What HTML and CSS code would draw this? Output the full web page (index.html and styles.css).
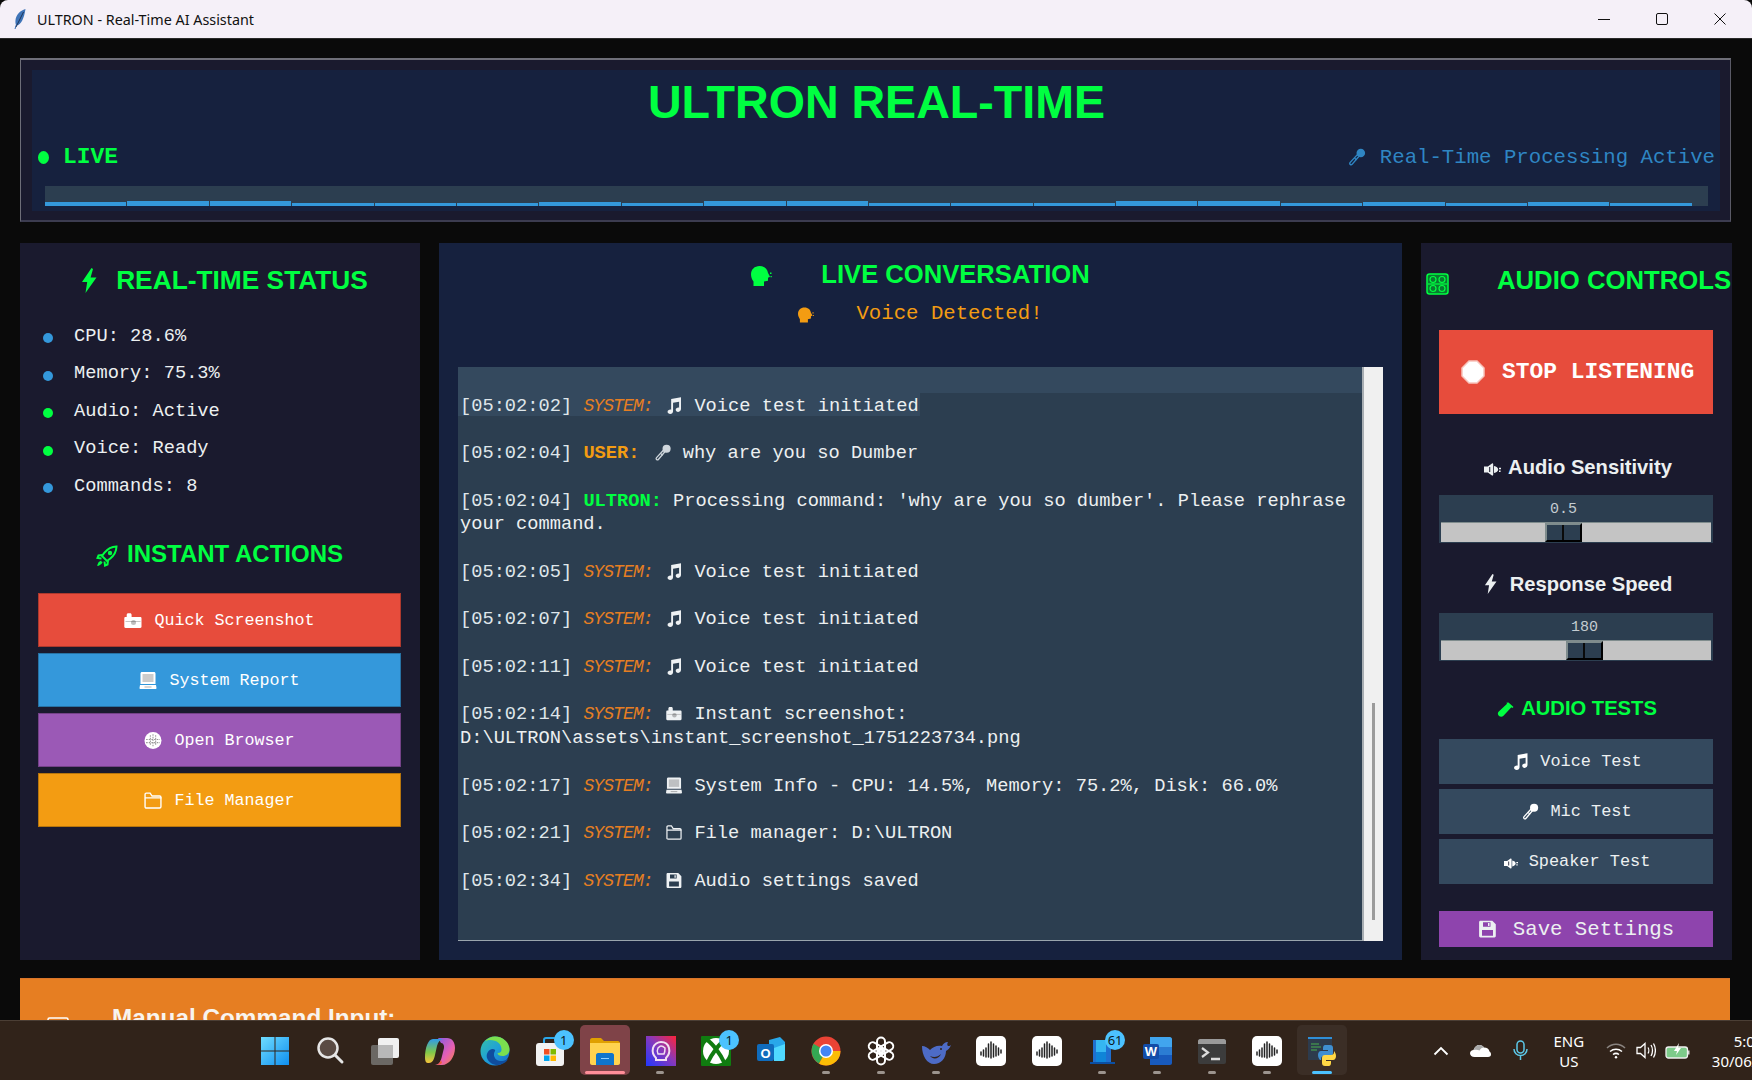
FILE: index.html
```html
<!DOCTYPE html>
<html lang="en">
<head>
<meta charset="utf-8">
<title>ULTRON - Real-Time AI Assistant</title>
<link rel="stylesheet" href="styles.css">
</head>
<body>
<svg class="defs" aria-hidden="true">
  <defs>
    <symbol id="i-bolt" viewBox="0 0 16 25"><path fill="currentColor" d="M10.500 0 1 14h5.200L4.500 25 15.500 9.500H9.600L12 1z"/></symbol>
    <symbol id="i-music" viewBox="0 0 16 18"><path fill="currentColor" d="M5 2.200 15.400.2v12.600c0 1.700-1.300 3-3 3-1.500 0-2.600-.9-2.600-2.200 0-1.400 1.300-2.400 2.900-2.400.3 0 .5 0 .7.1V5L7 6.100v9c0 1.700-1.300 2.900-3 2.900-1.600 0-2.800-.9-2.800-2.300 0-1.400 1.400-2.400 3-2.400.3 0 .6 0 .8.1z"/></symbol>
    <symbol id="i-mic" viewBox="0 0 18 18"><g fill="none" stroke="currentColor"><path stroke-width="1.400" d="M9.400 6.600 2.200 14.400c-.7.9-.6 1.700.2 2.200.7.4 1.300.2 1.900-.5l6.700-7.900z"/><path stroke-width="1.200" d="M6.500 10l2 2"/></g><circle cx="12.800" cy="5" r="4.300" fill="currentColor"/></symbol>
    <symbol id="i-cam" viewBox="0 0 18 16"><path fill="currentColor" d="M1.500 4.500h1.200V2.500C2.700 1.400 3.400.8 4.300.8h1.800c.9 0 1.500.6 1.500 1.700v2h8.700c.7 0 1.200.5 1.200 1.200v8.600c0 .7-.5 1.200-1.200 1.200H1.500c-.7 0-1.200-.5-1.200-1.200V5.700c0-.7.5-1.200 1.200-1.200z"/><path fill="#000" opacity=".22" d="M1.500 8.500h15v1h-15z"/><circle cx="9.500" cy="10" r="2.500" fill="#000" opacity=".25"/></symbol>
    <symbol id="i-monitor" viewBox="0 0 17 17"><path fill="currentColor" d="M2.500 0h12C15.400 0 16 .6 16 1.500V12H1V1.500C1 .6 1.600 0 2.500 0zM.5 13h16l.5 3c0 .6-.4 1-1 1H1c-.6 0-1-.4-1-1z"/><path fill="#000" opacity=".2" d="M3 2h11v8H3z"/><path fill="#000" opacity=".3" d="M5 14.500h7v1H5z"/></symbol>
    <symbol id="i-folder" viewBox="0 0 17 16"><path fill="none" stroke="currentColor" stroke-width="1.300" d="M1 14V2.300C1 1.600 1.500 1 2.200 1h3.600l1.800 2.800h7.200c.7 0 1.200.5 1.200 1.200v9c0 .6-.5 1.100-1.200 1.100H2.200C1.500 15.100 1 14.600 1 14zM1 5.500h15.800"/></symbol>
    <symbol id="i-save" viewBox="0 0 18 18"><path fill="currentColor" fill-rule="evenodd" d="M2 .7h11.800l3.500 3.500V16c0 .8-.6 1.400-1.300 1.400H2c-.8 0-1.400-.6-1.400-1.400V2.100C.6 1.300 1.200.7 2 .7zM4.500 2.300v4.500h7.500V2.300zM3.500 10v5.800h11V10z"/><path fill="currentColor" d="M9.500 3h1.500v3H9.500z"/></symbol>
    <symbol id="i-globe" viewBox="0 0 16 16"><circle cx="8" cy="8" r="8" fill="currentColor"/><path fill="none" stroke="#000" stroke-opacity=".4" stroke-width="1" stroke-dasharray="1.500 1" d="M1.500 7h13M1.500 10h13M5.500 3v10M8 2v12M10.500 3v10"/></symbol>
    <symbol id="i-rocket" viewBox="0 0 22 22"><g fill="none" stroke="currentColor" stroke-width="2"><path d="M20.500 1.500c-5 .2-9 2.400-12 6.200L6 11l5 5 3.300-2.500c3.800-3 6-7 6.200-12z"/><path d="M6.500 10 2.500 10.500 1.500 13l4 .5M12 15.500l-.5 4-2.500 1-.5-4M5.500 16.500c-1.500.5-2.700 1.700-3 3.200 1.500-.3 2.700-1.500 3.200-3"/></g><circle cx="14" cy="8" r="2.200" fill="currentColor"/></symbol>
    <symbol id="i-speech" viewBox="0 0 21 20"><path fill="currentColor" d="M8.500 0C13.500 0 16.500 3 17 7l2 3.700-2 1v3l-4 .8V20H2.500v-4.500C1 13.500 0 11 0 8.500 0 3.500 3.500 0 8.500 0z"/><path fill="currentColor" d="M19 6.500h1.500v1.400H19zM19.500 10h1.300v1.300h-1.300z"/></symbol>
    <symbol id="i-speaker" viewBox="0 0 17 13"><path fill="currentColor" d="M0 3.500h3.800L8 .5c.6-.4 1.200 0 1.200.7v10.600c0 .7-.6 1.100-1.200.7L3.800 9.500H0z"/><path fill="#1a1a2e" opacity=".8" d="M5 4h1.300v5H5z"/><path fill="currentColor" d="M10 3c2.600.4 4 1.800 4.200 3.500-.2 1.700-1.600 3.100-4.200 3.500zM15 4.800h2v1.400h-2zM15 7.500h1.600v1.400H15z"/></symbol>
    <symbol id="i-stop" viewBox="0 0 24 24"><path fill="#fff" stroke="#f8c4bc" stroke-width="1.500" d="M8 1h8l7 7v8l-7 7H8l-7-7V8z"/></symbol>
    <symbol id="i-knobs" viewBox="0 0 23 22"><rect x="1" y="1" width="21" height="20" rx="2.500" fill="#0a7a30" stroke="currentColor" stroke-width="1.500"/><g fill="none" stroke="currentColor" stroke-width="1.200"><circle cx="7" cy="6.500" r="3"/><circle cx="16" cy="6.500" r="3"/><circle cx="7" cy="15.500" r="3"/><circle cx="16" cy="15.500" r="3"/></g><path stroke="currentColor" stroke-width="1.200" d="M2 11h19"/></symbol>
    <symbol id="i-tube" viewBox="0 0 17 16"><path fill="currentColor" d="M11.500.5 16.500 5l-1.200 1.100-.9-.8-7.900 8.400c-1.300 1.400-3 1.500-4.500.3-1.500-1.300-1.500-3-.2-4.400l8.300-7.900-.8-.9z"/></symbol>
    <symbol id="aiwave" viewBox="0 0 30 30"><rect width="30" height="30" rx="5" fill="#fff"/><path fill="none" stroke="#222" stroke-width="1.500" stroke-linecap="round" d="M5 16v3M7.500 14v6M10 12v9M12.500 8v13M15 6v16M17.500 8v13M20 10v10M22.500 12v7M25 14v3"/></symbol>
  </defs>
</svg>

<div class="window">
  <div class="titlebar">
    <svg class="feather" viewBox="0 0 12 20"><path fill="#3f74b8" d="M11.500 0C6 1.500 2 6 1.500 11c-.2 2 0 3.500.4 4.500L.5 20h1l1.300-3.500C7 15.500 10 10 11.500 0z"/><path stroke="#15233f" stroke-width=".8" fill="none" d="M9.500 3 2 18"/></svg>
    <span class="title-text">ULTRON - Real-Time AI Assistant</span>
    <div class="winctl">
      <span class="winbtn"><svg width="12" height="12" viewBox="0 0 12 12"><path stroke="#111" d="M0 6.500h12"/></svg></span>
      <span class="winbtn"><svg width="12" height="12" viewBox="0 0 12 12"><rect x=".5" y=".5" width="11" height="11" rx="1.500" fill="none" stroke="#111"/></svg></span>
      <span class="winbtn"><svg width="12" height="12" viewBox="0 0 12 12"><path stroke="#111" d="m.5.5 11 11M11.500.5l-11 11"/></svg></span>
    </div>
  </div>

  <main class="content">
    <header class="hero">
      <div class="hero-inner">
        <h1 class="hero-title">ULTRON REAL-TIME</h1>
        <div class="hero-row">
          <span class="live"><span class="live-dot"></span>LIVE</span>
          <span class="proc"><svg class="ico-proc"><use href="#i-mic"/></svg>Real-Time Processing Active</span>
        </div>
        <div class="meter">
          <i style="height:4px"></i><i style="height:5px"></i><i style="height:5px"></i><i style="height:3px"></i><i style="height:3px"></i><i style="height:3px"></i><i style="height:4px"></i><i style="height:3px"></i><i style="height:5px"></i><i style="height:5px"></i><i style="height:3px"></i><i style="height:3px"></i><i style="height:3px"></i><i style="height:5px"></i><i style="height:5px"></i><i style="height:3px"></i><i style="height:4px"></i><i style="height:3px"></i><i style="height:4px"></i><i style="height:3px"></i>
        </div>
      </div>
    </header>

    <div class="columns">
      <aside class="panel panel-left">
        <h2 class="head head-status"><svg class="ico-bolt"><use href="#i-bolt"/></svg>REAL-TIME STATUS</h2>
        <ul class="status">
          <li><span class="dot dot-blue"></span>CPU: 28.6%</li>
          <li><span class="dot dot-blue"></span>Memory: 75.3%</li>
          <li><span class="dot dot-green"></span>Audio: Active</li>
          <li><span class="dot dot-green"></span>Voice: Ready</li>
          <li><span class="dot dot-blue"></span>Commands: 8</li>
        </ul>
        <h2 class="head head-actions"><svg class="ico-rocket"><use href="#i-rocket"/></svg>INSTANT ACTIONS</h2>
        <div class="actions">
          <button class="act act-red"><svg class="ico-act"><use href="#i-cam"/></svg>Quick Screenshot</button>
          <button class="act act-blue"><svg class="ico-act"><use href="#i-monitor"/></svg>System Report</button>
          <button class="act act-purple"><svg class="ico-act"><use href="#i-globe"/></svg>Open Browser</button>
          <button class="act act-orange"><svg class="ico-act"><use href="#i-folder"/></svg>File Manager</button>
        </div>
      </aside>

      <section class="panel panel-mid">
        <h2 class="head head-conv"><svg class="ico-speech"><use href="#i-speech"/></svg>LIVE CONVERSATION</h2>
        <div class="detected"><svg class="ico-speech-sm"><use href="#i-speech"/></svg>Voice Detected!</div>
        <div class="chat">
          <div class="log">
            <div class="sel-blank"></div>
            <p class="line line-sel"><span class="ts">[05:02:02]</span> <em class="sys">SYSTEM:</em> <svg class="ico-chat"><use href="#i-music"/></svg>Voice test initiated</p>
            <p class="line"><span class="ts">[05:02:04]</span> <b class="usr">USER:</b> <svg class="ico-chat ico-mic"><use href="#i-mic"/></svg>why are you so Dumber</p>
            <p class="line"><span class="ts">[05:02:04]</span> <b class="ult">ULTRON:</b> Processing command: 'why are you so dumber'. Please rephrase your command.</p>
            <p class="line"><span class="ts">[05:02:05]</span> <em class="sys">SYSTEM:</em> <svg class="ico-chat"><use href="#i-music"/></svg>Voice test initiated</p>
            <p class="line"><span class="ts">[05:02:07]</span> <em class="sys">SYSTEM:</em> <svg class="ico-chat"><use href="#i-music"/></svg>Voice test initiated</p>
            <p class="line"><span class="ts">[05:02:11]</span> <em class="sys">SYSTEM:</em> <svg class="ico-chat"><use href="#i-music"/></svg>Voice test initiated</p>
            <p class="line"><span class="ts">[05:02:14]</span> <em class="sys">SYSTEM:</em> <svg class="ico-chat"><use href="#i-cam"/></svg>Instant screenshot: D:\ULTRON\assets\instant_screenshot_1751223734.png</p>
            <p class="line"><span class="ts">[05:02:17]</span> <em class="sys">SYSTEM:</em> <svg class="ico-chat"><use href="#i-monitor"/></svg>System Info - CPU: 14.5%, Memory: 75.2%, Disk: 66.0%</p>
            <p class="line"><span class="ts">[05:02:21]</span> <em class="sys">SYSTEM:</em> <svg class="ico-chat"><use href="#i-folder"/></svg>File manager: D:\ULTRON</p>
            <p class="line"><span class="ts">[05:02:34]</span> <em class="sys">SYSTEM:</em> <svg class="ico-chat"><use href="#i-save"/></svg>Audio settings saved</p>
          </div>
          <div class="scrollbar"><span class="thumb"></span></div>
        </div>
      </section>

      <aside class="panel panel-right">
        <h2 class="head head-audio"><svg class="ico-knobs"><use href="#i-knobs"/></svg>AUDIO CONTROLS</h2>
        <button class="stop"><svg class="ico-stop"><use href="#i-stop"/></svg>STOP LISTENING</button>
        <h3 class="label label-a"><svg class="ico-spk"><use href="#i-speaker"/></svg>Audio Sensitivity</h3>
        <div class="slider">
          <div class="val" style="margin-left:104px">0.5</div>
          <div class="trough"><span class="knob" style="margin-left:104px"></span></div>
        </div>
        <h3 class="label label-b"><svg class="ico-bolt-sm"><use href="#i-bolt"/></svg>Response Speed</h3>
        <div class="slider">
          <div class="val" style="margin-left:125px">180</div>
          <div class="trough"><span class="knob" style="margin-left:125px"></span></div>
        </div>
        <h2 class="head head-tests"><svg class="ico-tube"><use href="#i-tube"/></svg>AUDIO TESTS</h2>
        <div class="tests">
          <button class="test"><svg class="ico-test"><use href="#i-music"/></svg>Voice Test</button>
          <button class="test"><svg class="ico-test"><use href="#i-mic"/></svg>Mic Test</button>
          <button class="test"><svg class="ico-test ico-test-spk"><use href="#i-speaker"/></svg>Speaker Test</button>
        </div>
        <button class="save"><svg class="ico-save"><use href="#i-save"/></svg>Save Settings</button>
      </aside>
    </div>

    <section class="manual">
      <svg class="ico-kbd" viewBox="0 0 22 14"><rect x="1" y="1" width="20" height="12" rx="1.500" fill="none" stroke="#fff" stroke-width="1.500"/></svg>
      <span>Manual Command Input:</span>
    </section>
  </main>
</div>

<footer class="taskbar">
  <div class="tb-apps">
    <span class="tb"><svg viewBox="0 0 30 30"><defs><linearGradient id="gw" x1="0" y1="0" x2="1" y2="1"><stop offset="0" stop-color="#6fdcff"/><stop offset="1" stop-color="#0f8ff0"/></linearGradient></defs><path fill="url(#gw)" d="M1 1h13.500v13.500H1zM15.500 1H29v13.500H15.500zM1 15.500h13.500V29H1zM15.500 15.500H29V29H15.500z"/></svg></span>
    <span class="tb"><svg viewBox="0 0 30 30"><circle cx="13" cy="12" r="9.500" fill="#5a4b44" stroke="#e6e6e6" stroke-width="2.500"/><path stroke="#e6e6e6" stroke-width="3" stroke-linecap="round" d="m20 19 7 7"/></svg></span>
    <span class="tb"><svg viewBox="0 0 30 30"><rect x="1" y="9" width="22" height="20" rx="2" fill="#6b6864"/><rect x="8" y="2" width="21" height="20" rx="2" fill="#f0f0f0"/><rect x="8" y="9" width="15" height="13" fill="#b8b8b8"/></svg></span>
    <span class="tb"><svg viewBox="0 0 30 30"><defs><linearGradient id="gc1" x1="0" y1="0" x2="0" y2="1"><stop offset="0" stop-color="#2f9ae8"/><stop offset=".55" stop-color="#7ec84a"/><stop offset="1" stop-color="#f5c33b"/></linearGradient><linearGradient id="gc2" x1="0" y1="0" x2="1" y2="1"><stop offset="0" stop-color="#7b5ce8"/><stop offset=".6" stop-color="#e65fb4"/><stop offset="1" stop-color="#f58a3c"/></linearGradient></defs><path fill="url(#gc2)" d="M13 2h9c5 0 8 4 8 10 0 9-6 17-13 17h-7c4 0 6-4 7-9l2-8c.5-3-1-5-3-5z"/><path fill="url(#gc1)" d="M8 3h10c-3 .5-5 3-6 7l-2 9c-1 5-3 8-6 8H3c-2 0-3-2-3-5C0 12 3 3 8 3z"/><path fill="#f0603c" d="M10 29c3 0 5-2 6-5l1 3c-1 1-3 2-5 2z"/></svg></span>
    <span class="tb"><svg viewBox="0 0 30 30"><defs><linearGradient id="ge1" x1="0" y1="0" x2="1" y2="1"><stop offset="0" stop-color="#35c1a5"/><stop offset=".5" stop-color="#1fa0d8"/><stop offset="1" stop-color="#1668c8"/></linearGradient></defs><circle cx="15" cy="15" r="14.500" fill="url(#ge1)"/><path fill="#7be04f" d="M15 .5c8 0 14.500 6 14.500 13 0 4-3 6.500-7 6.500-3 0-5-1-5-3 3 0 4-1.500 4-3.500C21.500 8 17 4 10 4 8 4 6 4.500 4.500 5.500 7 2.500 11 .5 15 .5z"/><path fill="#0f4d9e" d="M12 13c-4 1-6 5-5 9 1 3 4 6 9 7 5 0 10-2 12-6-3 2-8 3-11 1-3-2-4-6-2-9 1-1-1-2.500-3-2z"/></svg></span>
    <span class="tb"><svg viewBox="0 0 30 30"><path fill="none" stroke="#2aa6e8" stroke-width="2" d="M9 8V4c0-1.500 1-2 2-2h8c1 0 2 .5 2 2v4"/><rect x="1" y="7" width="28" height="23" rx="3" fill="#f2f2f2"/><path fill="#f25022" d="M9 13h5.500v5.500H9z"/><path fill="#7fba00" d="M15.500 13H21v5.500h-5.500z"/><path fill="#00a4ef" d="M9 19.500h5.500V25H9z"/><path fill="#ffb900" d="M15.500 19.500H21V25h-5.500z"/></svg><b class="badge">1</b></span>
    <span class="tb tb-active"><svg viewBox="0 0 30 30"><path fill="#e0a000" d="M0 4c0-1 1-2 2-2h9l3 3h14c1 0 2 1 2 2v4H0z"/><path fill="#ffd34f" d="M0 7h30v20c0 1-1 2-2 2H2c-1 0-2-1-2-2z"/><path fill="#0f75cc" d="M6 19c0-1 1-2 2-2h14c1 0 2 1 2 2v10H6z"/><path fill="#8fd0ff" d="M11 22h8v1h-8z"/></svg><span class="run run-pink"></span></span>
    <span class="tb"><svg viewBox="0 0 30 30"><defs><linearGradient id="gp" x1="0" y1="1" x2="1" y2="0"><stop offset="0" stop-color="#2038ff"/><stop offset=".55" stop-color="#8c38b8"/><stop offset="1" stop-color="#ff2438"/></linearGradient></defs><rect width="30" height="30" fill="url(#gp)"/><path fill="none" stroke="#f2dff2" stroke-width="2" d="M10 22c-3-3-4-6-3-10 1-4 5-6 8-6 4 0 7 2 8 6 1 4 0 7-3 10v2H10z"/><path fill="none" stroke="#f2dff2" stroke-width="1.500" d="M12 18c-1-2-1-4 0-6 1-1 2-2 3-2 2 0 3 1 4 2 0 2 0 4-1 6z"/></svg><span class="run"></span></span>
    <span class="tb"><svg viewBox="0 0 30 30"><rect width="30" height="30" rx="1" fill="#107c10"/><circle cx="15" cy="15" r="13" fill="#fff"/><path fill="none" stroke="#107c10" stroke-width="4" d="M6 4c5 3 13 13 18 24M24 4C19 7 11 17 6 28"/></svg><b class="badge">1</b></span>
    <span class="tb"><svg viewBox="0 0 30 30"><path fill="#28a8ea" d="M13 4 24 1l5 5v14c0 2-1 3-3 3H13z"/><path fill="#50d9ff" d="M18 12l11-4v15c0 1-1 2-2 2H18z"/><rect x="1" y="8" width="17" height="17" rx="2" fill="#0f6cbd"/><text x="9.500" y="21.500" class="tb-letter">O</text></svg></span>
    <span class="tb"><svg viewBox="0 0 30 30"><circle cx="15" cy="15" r="14.500" fill="#ea4335"/><path fill="#34a853" d="M15 15 8 27.500A14.500 14.500 0 0 1 2.500 7.700z"/><path fill="#fbbc05" d="M15 15h14.500A14.500 14.500 0 0 1 8 27.700l7-12.700z"/><circle cx="15" cy="15" r="7" fill="#fff"/><circle cx="15" cy="15" r="5.500" fill="#4285f4"/></svg><span class="run"></span></span>
    <span class="tb"><svg viewBox="0 0 30 30"><g fill="none" stroke="#fff" stroke-width="2"><rect x="11" y="1.500" width="8" height="15" rx="4"/><rect x="11" y="1.500" width="8" height="15" rx="4" transform="rotate(60 15 15)"/><rect x="11" y="1.500" width="8" height="15" rx="4" transform="rotate(120 15 15)"/><rect x="11" y="1.500" width="8" height="15" rx="4" transform="rotate(180 15 15)"/><rect x="11" y="1.500" width="8" height="15" rx="4" transform="rotate(240 15 15)"/><rect x="11" y="1.500" width="8" height="15" rx="4" transform="rotate(300 15 15)"/></g></svg><span class="run"></span></span>
    <span class="tb"><svg viewBox="0 0 30 30"><path fill="#4d6bc6" d="M1 10c3 0 6 2 8 4 3-3 7-5 12-4 1-2 3-4 6-4-1 2-1 3 0 4 1 0 2 0 3-1-1 3-3 5-5 6 0 7-5 13-12 13C6 28 1 20 1 10z"/><path fill="#31231a" d="M9 20c4 2 8 1 11-2-2 5-8 6-11 2z"/><circle cx="20" cy="13" r="1" fill="#31231a"/></svg><span class="run"></span></span>
    <span class="tb"><svg viewBox="0 0 30 30"><use href="#aiwave"/></svg></span>
    <span class="tb"><svg viewBox="0 0 30 30"><use href="#aiwave"/></svg></span>
    <span class="tb"><svg viewBox="0 0 30 30"><path fill="#1f6fd0" d="M6 4h14l4 4v18H6z"/><path fill="#35b6f2" d="M9 4h10v12H9z"/><path fill="#0b4fa3" d="M3 26h25v2H3z"/><path fill="#0f85d8" d="M9 16h10v10H9z"/></svg><b class="badge badge-wide">61</b><span class="run"></span></span>
    <span class="tb"><svg viewBox="0 0 30 30"><path fill="#41a5ee" d="M8 1h20c1 0 2 1 2 2v8H8z"/><path fill="#2b7cd3" d="M8 11h22v8H8z"/><path fill="#185abd" d="M8 19h22v8c0 1-1 2-2 2H8z"/><rect x="1" y="8" width="16" height="15" rx="2" fill="#124ca8"/><text x="9" y="20" class="tb-letter">W</text></svg><span class="run"></span></span>
    <span class="tb"><svg viewBox="0 0 30 30"><rect x="1" y="3" width="28" height="25" rx="2" fill="#3c3c3c"/><path d="M1 5c0-1 1-2 2-2h24c1 0 2 1 2 2v3H1z" fill="#9a9a9a"/><path fill="none" stroke="#dcdcdc" stroke-width="2.200" d="m5 12 6 4.500L5 21"/><path stroke="#dcdcdc" stroke-width="2.500" d="M14 23h9"/></svg><span class="run"></span></span>
    <span class="tb"><svg viewBox="0 0 30 30"><use href="#aiwave"/></svg><span class="run"></span></span>
    <span class="tb tb-current"><svg viewBox="0 0 30 30"><rect x="1" y="1" width="24" height="23" fill="#2d3b4d"/><path fill="#2f8fd8" d="M1 1h24v2H1z"/><path stroke="#4bb04f" d="M4 8h8M4 11h10M4 14h6"/><path fill="#3f8fd0" d="M18 9h5c2 0 3 1 3 3v5c0 2-1 3-3 3h-6c-2 0-3 1-3 3v1h-1c-1-1-2-3-2-5s1-4 3-4h7v-1h-5v-2c0-2 1-3 2-3z"/><path fill="#ffd845" d="M27 15c1 1 2 3 2 5s-1 4-3 4h-7v1h5v2c0 2-1 3-2 3h-4c-2 0-3-1-3-3v-5c0-2 1-3 3-3h6c2 0 3-1 3-3z"/></svg><span class="run run-blue"></span></span>
  </div>

  <div class="tray">
    <span class="tr tr-40"><svg width="16" height="10" viewBox="0 0 16 10"><path fill="none" stroke="#fff" stroke-width="1.800" d="m1.500 8.500 6.500-6.500 6.500 6.500"/></svg></span>
    <span class="tr tr-40"><svg width="21" height="13" viewBox="0 0 21 13"><path fill="#fff" d="M4.500 13C2 13 0 11.500 0 9.300 0 7.300 1.500 6 3.500 6 4.500 3 6.500 1 9.500 1c2 0 3.500 1 4.500 2.500 3 0 5 1.500 5.500 4 1 .5 1.500 1.500 1.500 3 0 1.500-1 2.500-3 2.500z"/><path fill="#a9a9a9" d="M3.500 6C4.500 3 6.500 1 9.500 1c2 0 3.500 1 4.500 2.500-2 .2-3.500 1-4.500 3C8 5.500 5.500 5.500 3.500 6z"/></svg></span>
    <span class="tr tr-40"><svg width="15" height="21" viewBox="0 0 15 21" fill="none" stroke="#5cc8e8" stroke-width="1.500"><rect x="4" y="1" width="7" height="12" rx="3.500"/><path d="M1 9c0 4 3 6.500 6.500 6.500S14 13 14 9M7.500 15.500V20"/></svg></span>
    <span class="tr tr-lang">ENG<br>US</span>
    <span class="tr tr-38"><svg width="20" height="16" viewBox="0 0 20 16" fill="none" stroke="#fff" stroke-width="1.500"><path stroke="#8a8480" d="M1 5c5-5 13-5 18 0"/><path d="M4 8.500c3.500-3 8.500-3 12 0M7 11.500c2-1.500 4-1.500 6 0"/><circle cx="10" cy="14.300" r="1.200" fill="#fff" stroke="none"/></svg></span>
    <span class="tr tr-22"><svg width="20" height="17" viewBox="0 0 20 17" fill="none" stroke="#fff" stroke-width="1.300"><path d="M1 5.500h3.500L9 1.500v14l-4.500-4H1zM12 5.500c1 1.500 1 4.500 0 6M15 3c2 3 2 8 0 11M17.500 1.500c2.500 4 2.500 10 0 14"/></svg></span>
    <span class="tr tr-42"><svg width="25" height="16" viewBox="0 0 25 16"><rect x="1" y="4" width="21.500" height="11" rx="2.500" fill="#7dcb8a" stroke="#f0f0f0" stroke-width="1.300"/><path stroke="#f0f0f0" stroke-width="1.300" d="M23.800 7.500v4"/><path fill="#fff" d="M14 0 9 8h3l-1 4 5-7h-3z"/></svg></span>
    <span class="clock">5:02 am<br>30/06/2025</span>
  </div>
</footer>
</body>
</html>
```
FILE: styles.css
```css
* { box-sizing: border-box; }
html, body { margin: 0; padding: 0; }
body {
  width: 1752px;
  height: 1080px;
  overflow: hidden;
  background: #0a0a0a;
  display: flex;
  flex-direction: column;
  font-family: "Liberation Mono", monospace;
  color: #ecf0f1;
}
.defs { width: 0; height: 0; display: block; position: absolute; }
h1, h2, h3, p, ul { margin: 0; padding: 0; }
svg { display: block; flex-shrink: 0; }
button { border: 0; margin: 0; padding: 0; font: inherit; color: inherit; }

.window { height: 1020px; overflow: hidden; flex-shrink: 0; background: #0a0a0a; }
.titlebar {
  height: 39px;
  background: #f5f0f8;
  border-radius: 8px 8px 0 0;
  border-bottom: 1px solid #2a2a2a;
  display: flex;
  align-items: center;
  padding-left: 14px;
  color: #111;
  font-family: "Noto Sans", sans-serif;
  font-size: 14.350px;
}
.feather { width: 12px; height: 20px; margin-right: 11px; }
.title-text { white-space: nowrap; }
.winctl { margin-left: auto; display: flex; padding-right: 3px; }
.winbtn { width: 58px; height: 38px; display: flex; align-items: center; justify-content: center; }

.content { padding: 19px 21px 0 20px; }
.hero {
  height: 164px;
  background: #1a1a2e;
  border: 2px solid #6e6e78;
  border-width: 2px 1px;
  border-bottom-color: #3c3c50;
  border-right-color: #5a5a66;
  padding: 10px 10px 9px 11px;
}
.hero-inner { height: 141px; background: #16213e; padding: 0 5px 0 6px; }
.hero-title {
  height: 60px;
  padding-top: 2px;
  text-align: center;
  font: bold 46.600px/60px "Liberation Sans", sans-serif;
  color: #00ff41;
}
.hero-row { display: flex; justify-content: space-between; align-items: center; height: 34px; margin-top: 10px; }
.live { display: flex; align-items: center; font-size: 22.900px; font-weight: bold; color: #00ff41; }
.live-dot { width: 11px; height: 13px; border-radius: 50%; background: #00ff41; margin-right: 14px; }
.proc { display: flex; align-items: center; font-size: 20.700px; color: #3498db; opacity: .85; }
.ico-proc { width: 18px; height: 18px; margin-right: 14px; }
.meter { height: 20px; margin: 12px 7px 0 7px; background: #2c3e50; display: flex; align-items: flex-end; padding-right: 13px; }
.meter i { width: 81.400px; margin-right: 1px; background: #3498db; display: block; }

.columns { display: grid; grid-template-columns: 400px 963px 311px; column-gap: 19px; height: 717px; margin-top: 21px; }
.panel { background: #1a1a2e; height: 717px; }
.head { font-family: "Liberation Sans", sans-serif; font-weight: bold; color: #00ff41; white-space: nowrap; display: flex; align-items: center; }

.panel-left { padding: 0 19px 0 18px; }
.head-status { height: 73px; font-size: 26.300px; justify-content: center; padding-left: 10px; padding-top: 1px; }
.ico-bolt { width: 16px; height: 25px; margin-right: 19px; }
.status { list-style: none; padding-top: 1px; }
.status li { height: 37.500px; display: flex; align-items: center; font-size: 18.700px; padding-left: 5px; white-space: pre; }
.dot { width: 10px; height: 10px; border-radius: 50%; margin: 5px 21px 0 0; }
.dot-blue { background: #3498db; }
.dot-green { background: #00ff41; }
.head-actions { height: 50px; margin-top: 24.500px; font-size: 24px; justify-content: center; }
.ico-rocket { width: 22px; height: 22px; margin-right: 9px; margin-top: 4px; }
.actions { display: flex; flex-direction: column; gap: 6px; margin-top: 14px; }
.act { height: 54px; display: flex; align-items: center; justify-content: center; font-size: 16.700px; color: #fff; border: 1px solid rgba(0,0,0,.25); white-space: pre; }
.ico-act { width: 18px; height: 17px; margin-right: 12px; }
.act-red { background: #e74c3c; }
.act-blue { background: #3498db; }
.act-purple { background: #9b59b6; }
.act-orange { background: #f39c12; }

.panel-mid { background: #16213e; padding: 6px 19px 0; }
.head-conv { height: 50px; font-size: 25.600px; justify-content: center; padding-left: 0; }
.ico-speech { width: 21px; height: 20px; margin-right: 49px; margin-top: 4px; }
.detected { height: 28px; display: flex; align-items: center; justify-content: center; font-size: 20.700px; color: #f39c12; }
.ico-speech-sm { width: 16px; height: 16px; margin-right: 42px; margin-top: 3px; }
.chat { display: flex; height: 574px; margin-top: 40px; width: 925px; }
.log { width: 904px; background: #2c3e50; border-bottom: 1px solid #9aa5ad; padding-left: 2px; overflow: hidden; font-size: 18.700px; line-height: 23.750px; }
.sel-blank { height: 25.600px; margin-left: -2px; background: #34495e; }
.line { padding-top: 2px; margin-bottom: 21.750px; }
.line-sel { width: 462px; height: 23.750px; margin-left: -2px; padding-left: 2px; white-space: nowrap; background: #34495e; margin-bottom: 23.750px; }
.ts { color: #dfe6ea; }
.sys { font-style: italic; color: #e67e22; font-size: 18px; letter-spacing: -.900px; }
.usr { color: #f39c12; }
.ult { color: #00ff41; }
.ico-chat { display: inline-block; width: 16px; height: 17px; margin: 0 12.500px 0 2px; vertical-align: -3px; color: #eef1f3; }
.ico-mic { width: 18px; margin: 0 11px 0 3px; color: #cfd6dc; }
.scrollbar { width: 21px; background: #f0f0f0; border-left: 2px solid #a7adb2; padding: 336px 0 0 8px; }
.thumb { display: block; width: 3px; height: 217px; background: #9b9b9b; }

.panel-right { padding: 0 19px 0 18px; }
.head-audio { height: 73px; font-size: 25.700px; margin-left: -13px; padding-top: 1px; }
.ico-knobs { width: 23px; height: 22px; margin-right: 48px; margin-top: 7px; }
.stop { width: 274px; height: 84px; margin-top: 14px; background: #e74c3c; display: flex; align-items: center; padding-left: 22px; font-size: 22.900px; font-weight: bold; color: #fff; white-space: pre; }
.ico-stop { width: 24px; height: 24px; margin-right: 17px; }
.label { display: flex; align-items: center; justify-content: center; height: 40px; padding-left: 4px; font: bold 20.200px/40px "Liberation Sans", sans-serif; color: #ecf0f1; white-space: nowrap; }
.label-a { margin-top: 33px; }
.ico-spk { width: 17px; height: 13px; margin: 5px 7px 0 0; }
.label-b { margin-top: 21px; }
.ico-bolt-sm { width: 13px; height: 20px; margin-right: 13px; }
.slider { width: 274px; height: 48px; margin-top: 8px; background: #2c3e50; padding: 0 2px; }
.label-b + .slider { margin-top: 9px; }
.val { width: 37px; height: 27px; line-height: 29px; text-align: center; font-size: 15px; color: #c4ccd1; }
.trough { height: 20px; background: #c4c4c4; border-top: 1px solid #7f8c8d; }
.knob { display: block; position: relative; width: 37px; height: 19px; background: #2c3e50; border: 2px solid; border-color: #7f8c8d #000 #000 #7f8c8d; }
.knob::after { content: ""; position: absolute; left: 15px; top: 0; width: 2px; height: 100%; background: #0a0a0a; }
.head-tests { height: 30px; margin-top: 32px; padding-left: 2px; font-size: 20.200px; justify-content: center; }
.ico-tube { width: 17px; height: 16px; margin: 4px 7px 0 0; }
.tests { display: flex; flex-direction: column; gap: 5px; margin-top: 16px; }
.test { height: 45px; padding-left: 2px; background: #34495e; display: flex; align-items: center; justify-content: center; font-size: 16.900px; color: #ecf0f1; white-space: pre; }
.ico-test { width: 17px; height: 17px; margin-right: 11px; color: #fff; }
.ico-test-spk { width: 14px; height: 11px; margin: 4px 11px 0 0; }
.save { width: 274px; height: 36px; margin-top: 27px; background: #8e44ad; display: flex; align-items: center; justify-content: center; font-size: 20.700px; color: #ecf0f1; white-space: pre; }
.ico-save { width: 19px; height: 18px; margin-right: 16px; }

.manual {
  height: 80px;
  margin-top: 18px;
  width: 1710px;
  background: #e67e22;
  border-top: 1px solid #d9752a;
  display: flex;
  align-items: flex-start;
  padding: 24px 0 0 27px;
  font: bold 24.300px/30px "Liberation Sans", sans-serif;
  color: #f8f4ee;
}
.ico-kbd { width: 22px; height: 14px; margin: 14px 43px 0 0; }

.taskbar {
  height: 60px;
  flex-shrink: 0;
  background: #31231a;
  border-top: 1px solid #4b3e35;
  display: flex;
  padding-left: 247px;
  overflow: hidden;
}
.tb-apps { display: flex; flex-shrink: 0; }
.tb { position: relative; width: 55.150px; height: 59px; display: flex; align-items: center; justify-content: center; }
.tb svg { width: 30px; height: 30px; position: relative; }
.tb-active::before, .tb-current::before { content: ""; position: absolute; left: 2.500px; top: 4px; width: 50px; height: 50px; border-radius: 5px; background: #7f4348; }
.tb-current::before { background: #3b2e26; }
.tb-letter { font: bold 13px "Liberation Sans", sans-serif; fill: #fff; text-anchor: middle; }
.badge { position: absolute; left: 31px; top: 9px; width: 20px; height: 20px; border-radius: 50%; background: #4cc2ff; color: #0c1a22; font: 400 13px/20px "Noto Sans", sans-serif; text-align: center; }
.run { position: absolute; left: 23.500px; top: 50px; width: 8px; height: 3px; border-radius: 2px; background: #9c948e; }
.run-pink { left: 7.500px; width: 40px; background: #ff8e98; }
.run-blue { left: 17.500px; width: 20px; background: #4cc2ff; }
.tray { display: flex; flex-shrink: 0; margin-left: 71px; height: 59px; align-items: center; color: #fff; font: 400 15px/20px "Noto Sans", sans-serif; }
.tr { display: flex; align-items: center; justify-content: center; text-align: center; flex-shrink: 0; }
.tr-40 { width: 40px; }
.tr-lang { width: 56px; }
.tr-38 { width: 38px; }
.tr-22 { width: 22px; }
.tr-42 { width: 42px; }
.clock { width: 78px; margin-left: 13px; text-align: right; flex-shrink: 0; white-space: nowrap; }
```
